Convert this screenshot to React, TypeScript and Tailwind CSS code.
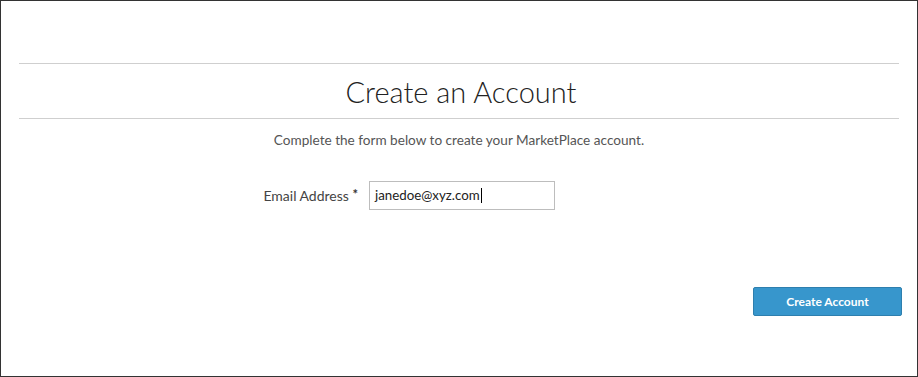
import React from "react";

export default function App() {
  return (
    <div className="w-[918px] h-[377px] border border-[#333] bg-white flex flex-col" style={{ fontFamily: "Lato, 'Open Sans', sans-serif" }}>
      <div className="h-[62px]" />
      <div className="mx-[18px] border-t border-[#cfcfcf]" />
      <div className="h-[54px] flex items-center justify-center">
        <h1 className="text-[29px] font-light text-[#222] leading-none pl-[4px]">Create an Account</h1>
      </div>
      <div className="mx-[18px] border-t border-[#cfcfcf]" />
      <p className="mt-[13px] text-center text-[13.6px] text-[#555] leading-[16px]">Complete the form below to create your MarketPlace account.</p>
      <div className="mt-[33px] flex items-center">
        <label className="w-[357px] text-right text-[14px] text-[#444]">
          Email Address <span className="text-[#333] relative top-[-2px] text-[13px] font-bold">*</span>
        </label>
        <div className="ml-[11px] w-[186px] h-[29px] border border-[#bdbdbd] flex items-center px-[5px] text-[13.3px] text-[#222]">
          janedoe@xyz.com<span className="w-px h-[15px] bg-black ml-px" />
        </div>
      </div>
      <div className="mt-[77px] flex justify-end pr-[15px]">
        <button className="w-[149px] h-[29px] bg-[#3796cc] border border-[#2e7fae] rounded-[2px] text-white text-[12px] font-bold">
          Create Account
        </button>
      </div>
    </div>
  );
}
